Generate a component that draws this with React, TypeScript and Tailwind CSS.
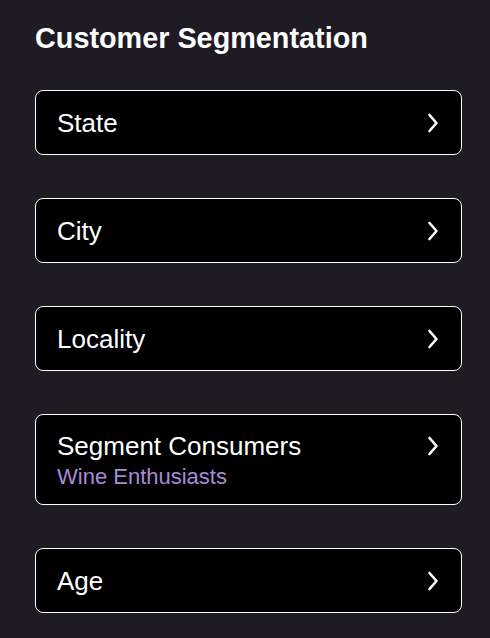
const rows: { label: string; sub?: string }[] = [
  { label: "State" },
  { label: "City" },
  { label: "Locality" },
  { label: "Segment Consumers", sub: "Wine Enthusiasts" },
  { label: "Age" },
];

function Chevron() {
  return (
    <svg width="12" height="20" viewBox="0 0 12 20" fill="none" className="shrink-0">
      <path d="M2.5 2 L9.5 10 L2.5 18" stroke="#ffffff" strokeWidth="2.6" strokeLinecap="round" strokeLinejoin="round" />
    </svg>
  );
}

export default function App() {
  return (
    <div
      className="min-h-[638px] w-[490px] bg-[#1e1b25] pl-[35px] pr-[28px] pt-[20px]"
      style={{ fontFamily: '"Liberation Sans", Arial, sans-serif' }}
    >
      <h1 className="text-[28.8px] font-bold leading-[36px] text-white">Customer Segmentation</h1>

      <div className="mt-[34px] flex flex-col gap-[43px]">
        {rows.map((r) =>
          r.sub ? (
            <button
              key={r.label}
              className="flex h-[91px] w-full items-start justify-between rounded-[8px] border-[1.5px] border-white bg-black pl-[21px] pr-[22px] pt-[16px] text-left"
            >
              <div className="flex flex-col">
                <span className="text-[26px] leading-[30px] text-white">{r.label}</span>
                <span className="mt-[3px] text-[22px] leading-[26px] text-[#a98ad9]">{r.sub}</span>
              </div>
              <div className="flex h-[30px] items-center">
                <Chevron />
              </div>
            </button>
          ) : (
            <button
              key={r.label}
              className="flex h-[65px] w-full items-center justify-between rounded-[8px] border-[1.5px] border-white bg-black pl-[21px] pr-[22px] text-left"
            >
              <span className="text-[26px] leading-[30px] text-white">{r.label}</span>
              <Chevron />
            </button>
          )
        )}
      </div>
    </div>
  );
}
